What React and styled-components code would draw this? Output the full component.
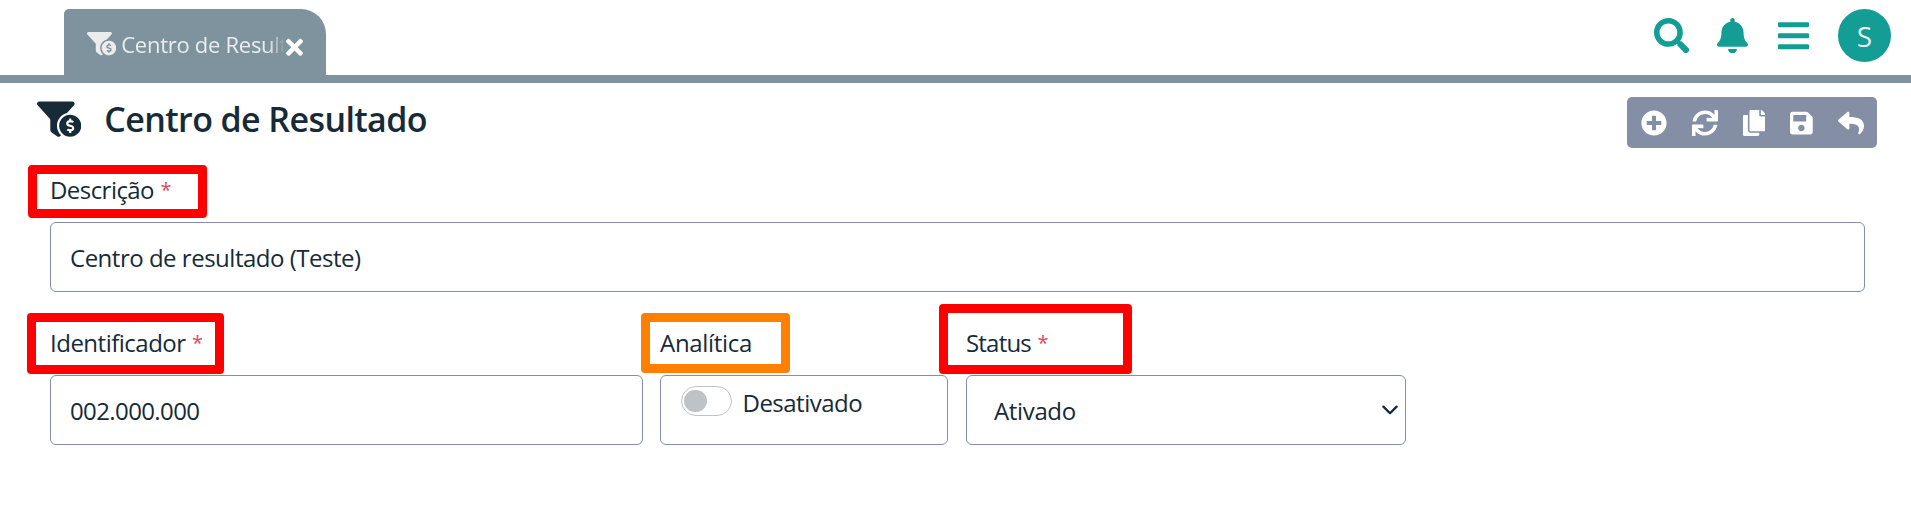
import React from 'react';
import styled, { createGlobalStyle } from 'styled-components';
import {
  FaFunnelDollar, FaTimes, FaSearch, FaBell, FaBars, FaPlusCircle,
  FaSync, FaCopy, FaSave, FaReply,
} from 'react-icons/fa';

const ink = '#162a37';
const teal = '#139d95';
const slate = '#7e939e';
const line = '#8190aa';

const Global = createGlobalStyle`
  *, *::before, *::after { box-sizing: border-box; }
  body {
    margin: 0;
    background: #fff;
    color: ${ink};
    font-family: "Open Sans", "Noto Sans", sans-serif;
    font-size: 24px;
  }
  svg { display: block; flex: none; }
`;

const Icon = styled.span`
  display: flex;
  svg {
    width: ${(p) => p.$w || p.$size}px;
    height: ${(p) => p.$size}px;
  }
`;

const Header = styled.header`
  display: flex;
  justify-content: space-between;
  height: 83px;
  padding: 9px 20px 0 64px;
  border-bottom: 8px solid ${slate};
`;

const Tab = styled.div`
  display: flex;
  align-items: center;
  width: 262px;
  height: 66px;
  padding: 4px 22px 0 23px;
  border-radius: 5px 25px 0 0;
  background: ${slate};
  color: #ececec;
`;

const TabTitle = styled.span`
  width: 164px;
  height: 34px;
  margin: -1px 0 0 5px;
  overflow: hidden;
  white-space: nowrap;
  font-size: 22px;
  line-height: 34px;
  letter-spacing: -0.28px;
  mask-image: linear-gradient(to right, #000 148px, transparent 164px);
`;

const TabClose = styled(Icon)`
  margin: 7px 0 0 1px;
  color: #fff;
`;

const HeaderActions = styled.div`
  display: flex;
  align-items: center;
  height: 53px;
  color: ${teal};
`;

const HeaderIcon = styled(Icon)`
  margin-right: ${(p) => p.$after}px;
`;

const Avatar = styled.div`
  width: 53px;
  height: 53px;
  border-radius: 50%;
  background: ${teal};
  color: #e9f1f0;
  font-size: 28px;
  line-height: 54px;
  text-align: center;
`;

const TitleBar = styled.div`
  display: flex;
  justify-content: space-between;
  align-items: flex-start;
  height: 89px;
  padding: 11px 34px 0 37px;
`;

const Heading = styled.div`
  display: flex;
  align-items: center;
  gap: 23px;
`;

const Title = styled.h1`
  margin: 0;
  font-size: 34px;
  font-weight: 600;
  line-height: 51px;
  letter-spacing: -0.6px;
`;

const Toolbar = styled.div`
  display: flex;
  align-items: center;
  gap: 25px;
  width: 250px;
  height: 51px;
  margin-top: 3px;
  padding-left: 13.6px;
  border-radius: 5px;
  background: #848ea5;
  color: #fff;
`;

const Form = styled.form`
  display: grid;
  gap: 33px;
  padding: 0 46px 0 50px;
`;

const FieldRow = styled.div`
  display: flex;
`;

const Field = styled.div`
  display: flex;
  flex-direction: column;
  gap: 14px;
  width: ${(p) => (p.$width ? `${p.$width}px` : '100%')};
  margin-right: ${(p) => p.$after || 0}px;
`;

const Label = styled.label`
  position: relative;
  height: 36px;
  line-height: 36px;
  white-space: pre;
`;

const Spaced = styled.span`
  letter-spacing: ${(p) => p.$track}px;
`;

const Required = styled.span`
  margin-left: 6.5px;
  font-size: 20px;
  line-height: 0;
  vertical-align: 2.5px;
  color: #e04a5c;
`;

/* Outline laid over a label to call attention to it */
const Highlight = styled.span`
  position: absolute;
  left: ${(p) => p.$x}px;
  top: ${(p) => p.$y}px;
  width: ${(p) => p.$w}px;
  height: ${(p) => p.$h}px;
  border: 9px solid ${(p) => p.$color || '#ff0000'};
  border-radius: 4px;
  pointer-events: none;
`;

const Control = styled.div`
  display: flex;
  align-items: center;
  height: 70px;
  padding: 0 7px 0 ${(p) => p.$left || 19}px;
  border: 1px solid ${line};
  border-radius: 6px;
  white-space: pre;
`;

const SelectControl = styled(Control)`
  justify-content: space-between;
`;

const SwitchControl = styled(Control)`
  align-items: flex-start;
  gap: 10.5px;
  padding: 10px 0 0 20px;
  line-height: 34px;
`;

const Switch = styled.span`
  display: flex;
  align-items: center;
  width: 51px;
  height: 30px;
  padding-left: 2px;
  border: 1px solid #bdc3c7;
  border-radius: 15px;
`;

const Knob = styled.span`
  width: 22.5px;
  height: 22.5px;
  border-radius: 50%;
  background: #bdc3c7;
`;

export default function App() {
  return (
    <>
      <Global />
      <Header>
        <Tab>
          <Icon $size={29.3}><FaFunnelDollar /></Icon>
          <TabTitle>Centro de Resultado</TabTitle>
          <TabClose $size={24.7} $w={17}><FaTimes /></TabClose>
        </Tab>
        <HeaderActions>
          <HeaderIcon $size={35.5} $after={28}><FaSearch /></HeaderIcon>
          <HeaderIcon $size={35.5} $w={31} $after={30}><FaBell /></HeaderIcon>
          <HeaderIcon $size={35.5} $w={31} $after={29}><FaBars /></HeaderIcon>
          <Avatar>S</Avatar>
        </HeaderActions>
      </Header>

      <TitleBar>
        <Heading>
          <Icon $size={44.3}><FaFunnelDollar /></Icon>
          <Title>Centro de Resultado</Title>
        </Heading>
        <Toolbar>
          <Icon $size={26}><FaPlusCircle /></Icon>
          <Icon $size={26}><FaSync /></Icon>
          <Icon $size={26} $w={22.75}><FaCopy /></Icon>
          <Icon $size={26} $w={22.75}><FaSave /></Icon>
          <Icon $size={26}><FaReply /></Icon>
        </Toolbar>
      </TitleBar>

      <Form>
        <FieldRow>
          <Field>
            <Label>
              <Spaced $track={-0.55}>Descrição</Spaced>
              <Required>*</Required>
              <Highlight $x={-22} $y={-7} $w={179} $h={53} />
            </Label>
            <Control><Spaced $track={-0.49}>Centro de resultado (Teste)</Spaced></Control>
          </Field>
        </FieldRow>

        <FieldRow>
          <Field $width={593} $after={17}>
            <Label>
              <Spaced $track={-0.5}>Identificador</Spaced>
              <Required>*</Required>
              <Highlight $x={-23} $y={-12} $w={197} $h={61} />
            </Label>
            <Control><Spaced $track={-0.61}>002.000.000</Spaced></Control>
          </Field>
          <Field $width={288} $after={18}>
            <Label>
              <Spaced $track={-0.3}>Analítica</Spaced>
              <Highlight $x={-19} $y={-12} $w={149} $h={60} $color="#ff8000" />
            </Label>
            <SwitchControl>
              <Switch><Knob /></Switch>
              <Spaced $track={-0.51}>Desativado</Spaced>
            </SwitchControl>
          </Field>
          <Field $width={440}>
            <Label>
              <Spaced $track={-0.8}>Status</Spaced>
              <Required>*</Required>
              <Highlight $x={-27} $y={-21} $w={193} $h={70} />
            </Label>
            <SelectControl $left={27}>
              <Spaced $track={-0.35}>Ativado</Spaced>
              <svg width="16" height="11" viewBox="0 0 16 11" fill="none">
                <path d="M1.4 1.6 8 8.2l6.6-6.6" stroke={ink} strokeWidth="2.3" strokeLinecap="round" strokeLinejoin="round" />
              </svg>
            </SelectControl>
          </Field>
        </FieldRow>
      </Form>
    </>
  );
}
